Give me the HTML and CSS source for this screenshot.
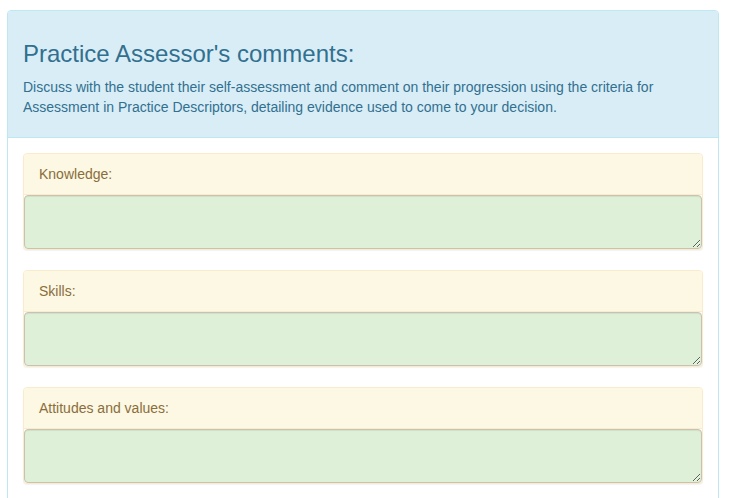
FILE: index.html
```html
<!DOCTYPE html>
<html lang="en">
<head>
<meta charset="utf-8">
<title>Practice Assessor's comments</title>
<link rel="stylesheet" href="styles.css">
</head>
<body>
<div class="page">
  <div class="panel panel-info">
    <div class="panel-heading">
      <h3 class="panel-title">Practice Assessor's comments:</h3>
      <p class="panel-desc">Discuss with the student their self-assessment and comment on their progression using the criteria for Assessment in Practice Descriptors, detailing evidence used to come to your decision.</p>
    </div>
    <div class="panel-body">
      <div class="panel panel-warning">
        <div class="panel-heading"><label class="field-label" for="knowledge">Knowledge:</label></div>
        <textarea id="knowledge" class="form-control" rows="2"></textarea>
      </div>
      <div class="panel panel-warning">
        <div class="panel-heading"><label class="field-label" for="skills">Skills:</label></div>
        <textarea id="skills" class="form-control" rows="2"></textarea>
      </div>
      <div class="panel panel-warning">
        <div class="panel-heading"><label class="field-label" for="attitudes">Attitudes and values:</label></div>
        <textarea id="attitudes" class="form-control" rows="2"></textarea>
      </div>
    </div>
  </div>
</div>
</body>
</html>
```

FILE: styles.css
```css
* { box-sizing: border-box; }
html, body {
  margin: 0;
  padding: 0;
  background: #fff;
  font-family: "Liberation Sans", Arial, Helvetica, sans-serif;
  font-size: 14px;
  line-height: 20px;
  color: #333;
}
.page {
  padding: 10px 10px 0 7px;
}
.panel {
  background: #fff;
  border: 1px solid transparent;
  border-radius: 4px;
  margin-bottom: 20px;
  box-shadow: 0 1px 1px rgba(0,0,0,0.05);
}
.panel-heading {
  padding: 10px 15px;
  border-bottom: 1px solid transparent;
  border-top-left-radius: 3px;
  border-top-right-radius: 3px;
}
.panel-info {
  border-color: #bce8f1;
}
.panel-info > .panel-heading {
  background: #d9edf7;
  border-color: #bce8f1;
  color: #31708f;
}
.panel-title {
  margin: 20px 0 10px;
  font-size: 24px;
  font-weight: 500;
  line-height: 26.4px;
}
.panel-desc {
  margin: 0 0 10px;
}
.panel-body {
  padding: 15px;
}
.panel-warning {
  border-color: #faebcc;
}
.panel-warning > .panel-heading {
  background: #fcf8e3;
  border-color: #faebcc;
  color: #8a6d3b;
}
.field-label {
  font-weight: normal;
}
.form-control {
  display: block;
  width: 100%;
  height: 54px;
  padding: 6px 12px;
  margin: 0;
  font: inherit;
  color: #555;
  background: #dff0d8;
  border: 1px solid #c9c2b3;
  border-radius: 4px;
  box-shadow: inset 0 1px 1px rgba(0,0,0,0.075);
  resize: vertical;
}
```
